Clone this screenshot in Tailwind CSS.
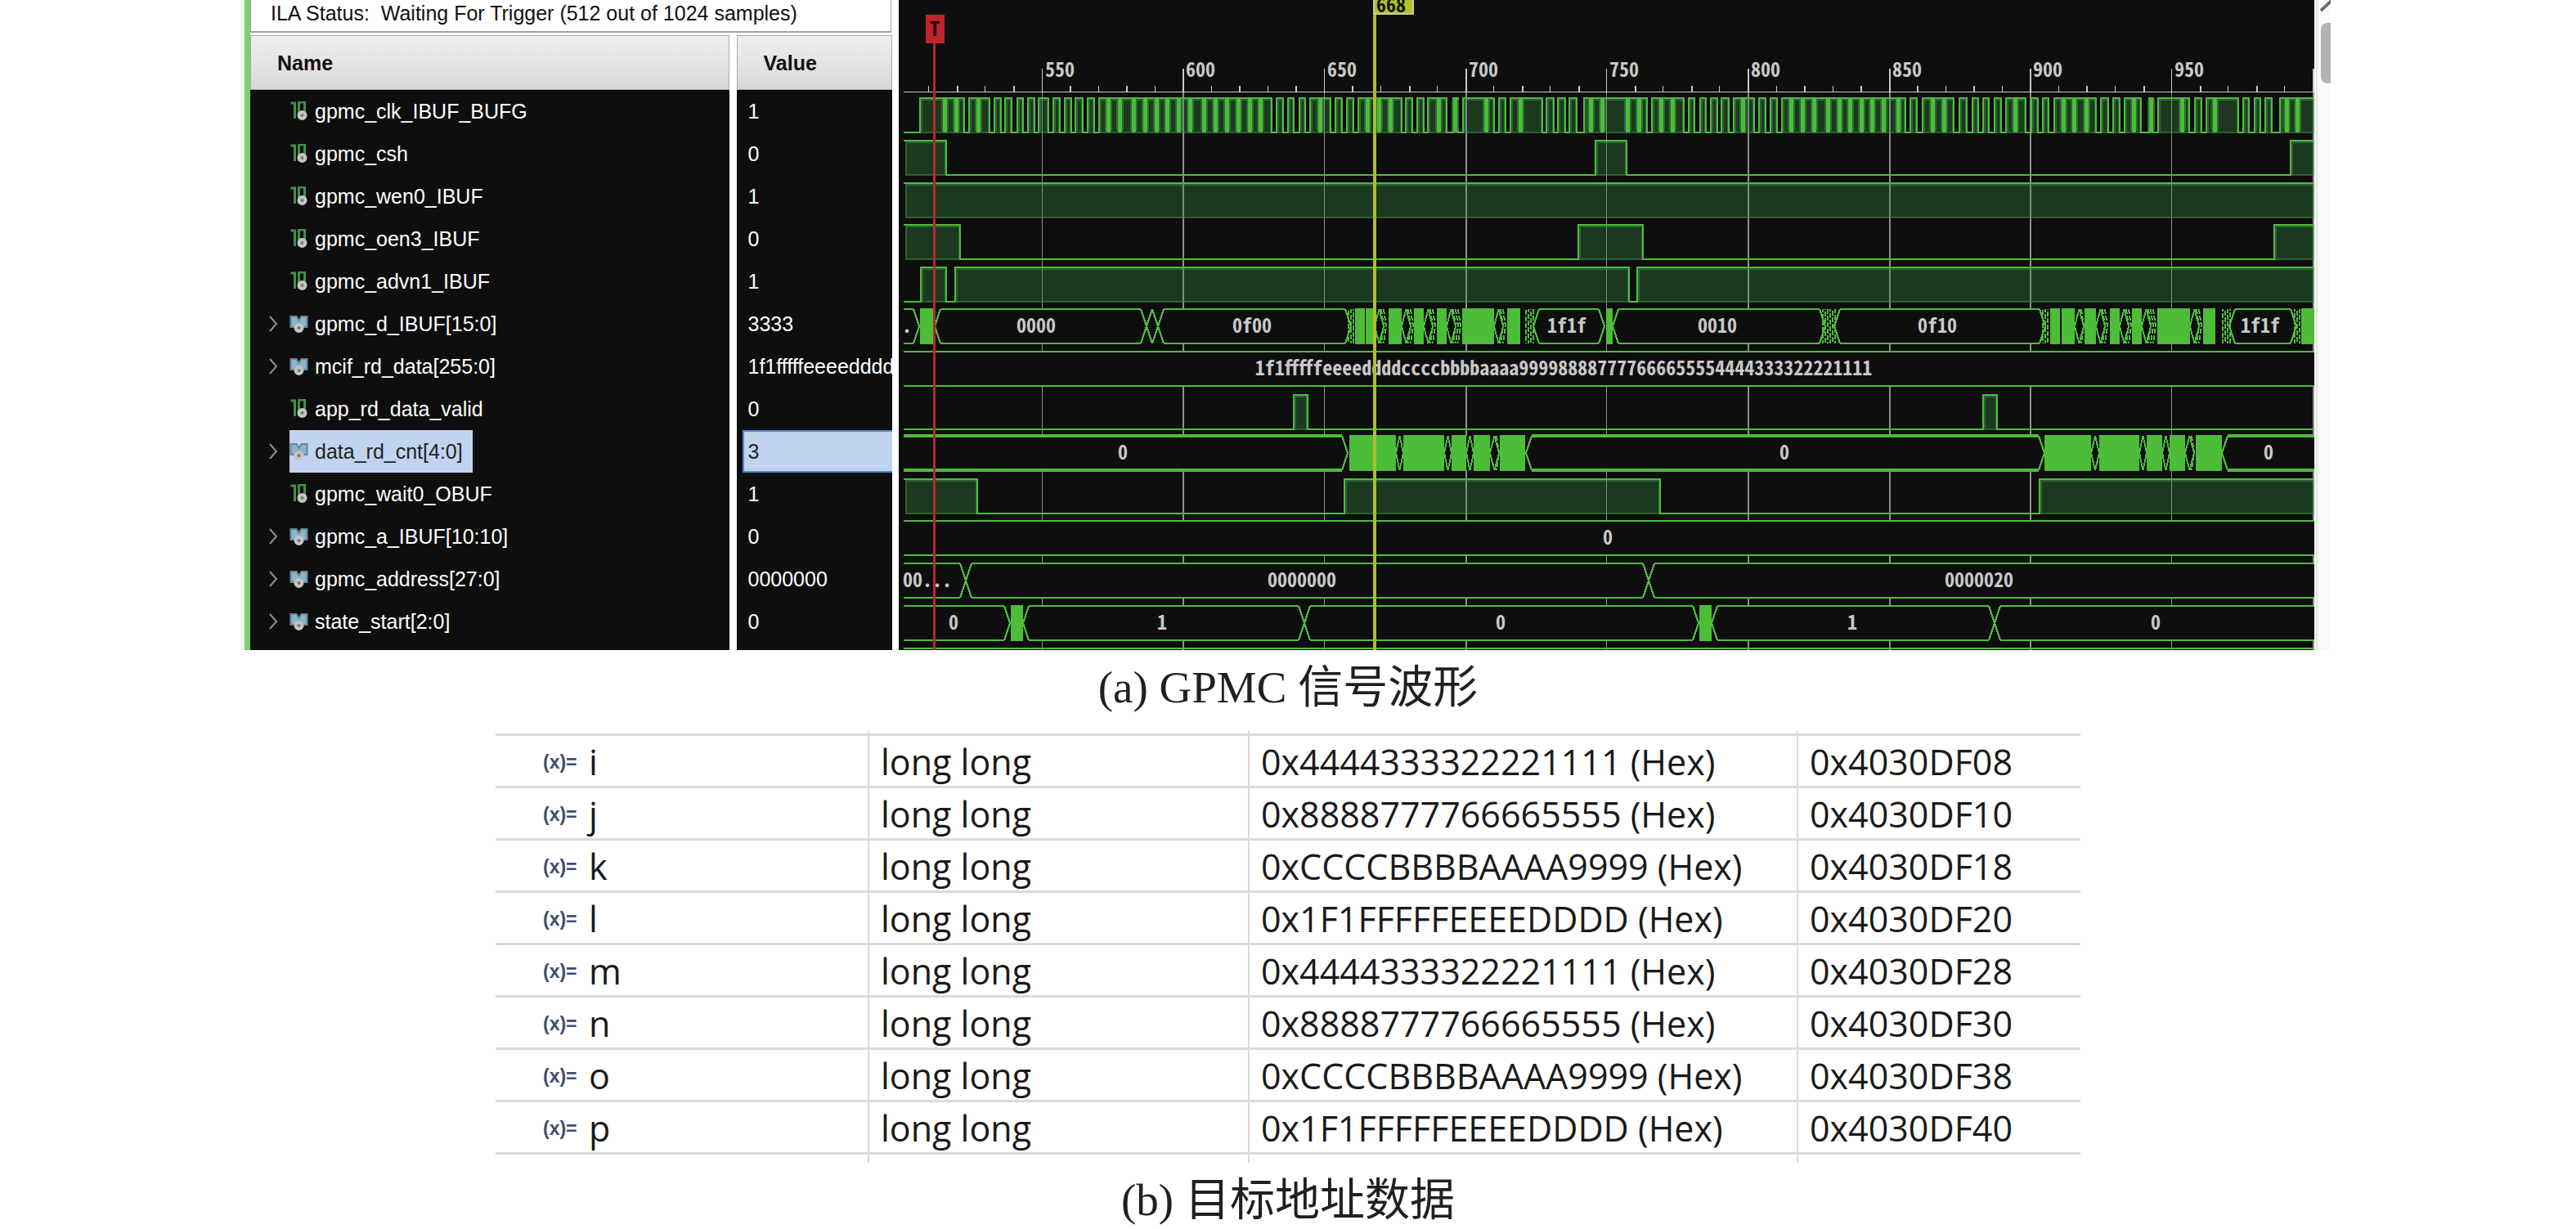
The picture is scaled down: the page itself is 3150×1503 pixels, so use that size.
<!DOCTYPE html>
<html lang="zh">
<head>
  <meta charset="UTF-8">
  <meta name="viewport" content="width=device-width, initial-scale=1.0">
  <title>GPMC</title>
  <script src="https://cdn.jsdelivr.net/npm/@tailwindcss/browser@4"></script>
</head>
<body class="bg-white text-[#231f20]">
  <!-- Icon sprites -->
  <svg class="hidden">
    <symbol id="bit" viewBox="0 0 22 24">
      <path d="M1 2h5v19" fill="none" stroke="#3f9148" stroke-width="3"/>
      <path d="M11 1h7v18h-7z" fill="none" stroke="#3f9148" stroke-width="3"/>
      <circle cx="15" cy="17" r="4" fill="#777" stroke="#c4c4c4" stroke-width="4"/>
    </symbol>
    <symbol id="bus" viewBox="0 0 22 24">
      <path d="M1 3h7l3 5 3-5h7v13h-5l-5 3-5-3H1z" fill="#86b6c8" stroke="#6a8794" stroke-width="2"/>
      <circle cx="11" cy="17" r="4" fill="#777" stroke="#c4c4c4" stroke-width="4"/>
    </symbol>
    <symbol id="chev" viewBox="0 0 12 20">
      <path d="M2 1l8 9-8 9" fill="none" stroke="#8c8c8c" stroke-width="2"/>
    </symbol>
  </svg>

  <main>
    <!-- Logic analyzer -->
    <section class="ml-[295px] mr-[300px] flex h-[795px] overflow-hidden font-['Liberation_Sans',sans-serif] text-[25px] leading-7">
      <div class="w-1 shrink-0 bg-[#f0f0ee]"></div>
      <div class="w-[7px] shrink-0 bg-[#7dce6e]"></div>

      <div class="w-[793px] shrink-0">
        <p class="mb-[3px] h-10 w-[784px] border-x border-b-2 border-[#a3a3a5] pt-0.5 pl-6 text-[#111] whitespace-pre">ILA Status:  Waiting For Trigger (512 out of 1024 samples)</p>
        <table class="w-[785px] table-fixed border-collapse text-left">
          <colgroup><col class="w-[590px]"><col></colgroup>
          <thead>
            <tr class="h-[67px] text-[#111]">
              <th class="border-r-[9px] border-white p-0"><div class="flex h-[67px] items-center border border-[#aaaaac] bg-linear-to-b from-[#f0f0f0] to-[#d8d6da] pl-8">Name</div></th>
              <th class="p-0"><div class="flex h-[67px] items-center border border-[#aaaaac] bg-linear-to-b from-[#f0f0f0] to-[#d8d6da] pl-8">Value</div></th>
            </tr>
          </thead>
          <tbody id="signals" class="bg-[#0e0e0e] text-white"></tbody>
        </table>
      </div>

      <!-- Waveforms -->
      <div class="min-w-0 flex-1 bg-[#0e0e0e]">
        <svg id="wave" viewBox="0 0 1731 795" class="h-[795px] w-full" preserveAspectRatio="xMinYMin meet"></svg>
      </div>

      <!-- Scrollbar -->
      <div class="ml-0.5 w-[18px] shrink-0 overflow-hidden border-l-2 border-[#e4e4e4] bg-[#fafaf9]">
        <svg viewBox="0 0 16 110" class="h-[110px] w-4">
          <path d="M4 13l14-13" stroke="#6b6e75" stroke-width="4"/>
          <rect x="4" y="28" width="24" height="74" rx="8" fill="#b4b4b4"/>
        </svg>
      </div>
    </section>
    <h2 class="mt-3 text-center font-['Liberation_Serif','Noto_Sans_CJK_SC',serif] text-[55px] leading-[68px]">(a) GPMC 信号波形</h2>

    <!-- Variables -->
    <section class="mx-[606px] mt-[19px]">
      <table class="w-full table-fixed border-collapse font-['Open_Sans',sans-serif] text-[43px] leading-[58px] text-[#1a1a1a]">
        <colgroup><col class="w-[456px]"><col class="w-[465px]"><col class="w-[671px]"><col></colgroup>
        <tbody id="vars"></tbody>
      </table>
    </section>
    <h2 class="mt-3 text-center font-['Liberation_Serif','Noto_Sans_CJK_SC',serif] text-[55px] leading-[68px]">(b) 目标地址数据</h2>
  </main>

  <script>
    // ---- signal list ----
    const signals = [
      ['gpmc_clk_IBUF_BUFG', '1'],
      ['gpmc_csh', '0'],
      ['gpmc_wen0_IBUF', '1'],
      ['gpmc_oen3_IBUF', '0'],
      ['gpmc_advn1_IBUF', '1'],
      ['gpmc_d_IBUF[15:0]', '3333'],
      ['mcif_rd_data[255:0]', '1f1fffffeeeedddd'],
      ['app_rd_data_valid', '0'],
      ['data_rd_cnt[4:0]', '3'],
      ['gpmc_wait0_OBUF', '1'],
      ['gpmc_a_IBUF[10:10]', '0'],
      ['gpmc_address[27:0]', '0000000'],
      ['state_start[2:0]', '0'],
    ];
    document.getElementById('signals').innerHTML = signals.map(([name, value]) => {
      const isBus = name.includes('[');
      const selected = name.startsWith('data_rd_cnt');
      return `<tr class="h-[52px]">
        <td class="border-r-[9px] border-white p-0"><div class="flex h-[52px] items-center">
          <span class="flex w-12 justify-end pr-3.5">${isBus ? '<svg class="h-5 w-3"><use href="#chev"/></svg>' : ''}</span>
          <span class="flex h-full items-center gap-2 pr-3 ${selected ? 'bg-[#c1d3ef] text-[#222]' : ''}"><svg class="h-6 w-[23px]"><use href="#${isBus ? 'bus' : 'bit'}"/></svg>${name}</span>
        </div></td>
        <td class="overflow-hidden p-0"><div class="ml-[7px] flex h-[52px] items-center pl-[5px] border-2 border-r-0 ${selected ? 'border-[#4d8ac6] bg-[#c1d3ef] text-[#222]' : 'border-transparent'}">${value}</div></td>
      </tr>`;
    }).join('') + '<tr class="h-[9px]"><td class="border-r-[9px] border-white p-0"></td><td class="p-0"></td></tr>';

    // ---- waveforms ----
    const LINE = '#4fba3f', SOLID = '#4cbc39', BG = '#0e0e0e', END = 1731;
    const rowTop = i => Math.round(120 + i * 51.8);
    const out = [];
    const rect = (x, y, w, h, c) => out.push(`<rect x="${x}" y="${y}" width="${w}" height="${h}" fill="${c}"/>`);
    const label = (x, y, t, c = '#c8c8c8', anchor = 'middle') => out.push(`<text x="${x}" y="${y}" fill="${c}" text-anchor="${anchor}">${t}</text>`);
    const tickX = s => 175.5 + (s - 550) * 3.454;

    // ruler and grid
    rect(6, 112, END - 6, 1, '#c8c8c8');
    for (let s = 510; s <= 1000; s += 10) {
      const x = Math.round(tickX(s));
      const major = s % 50 === 0;
      if (major) {
        const w = [550, 650, 750, 950].includes(s) ? 1 : 2;
        rect(x - 1, 84, w, 29, '#c8c8c8');
        rect(x - 1, 113, w, 682, '#8e8e92');
        if (s < 1000) label(x + 3, 94, s, '#c8c8c8', 'start');
      } else rect(x - 1, 105, s % 20 ? 1 : 2, 8, '#c8c8c8');
    }

    // single-bit rows: ranges where the signal is high
    function bit(i, highs) {
      const t = rowTop(i), b = t + 42;
      let d = `M6 ${highs[0][0] <= 7 ? t : b}`;
      highs.forEach(([a, z]) => {
        out.push(`<rect x="${a + 2}" y="${t + 2}" width="${z - a - 3}" height="${b - t - 2}" fill="#3c9447" fill-opacity=".32" stroke="#3c9447" stroke-opacity=".55" stroke-width="2"/>`);
        if (a > 7) d += `H${a}V${t}`;
        d += `H${z}`;
        if (z < END) d += `V${b}`;
      });
      if (highs[highs.length - 1][1] < END) d += `H${END}`;
      out.push(`<path d="${d}" fill="none" stroke="${LINE}" stroke-width="2"/>`);
    }

    // clock: low gaps and the places where two edges touch
    const gaps = [[80,86],[111,117],[125,130],[138,145],[152,158],[166,171],[183,189],[197,203],[211,216],[225,231],[239,245],[456,462],[470,476],[483,490],[497,503],[528,534],[542,548],[556,562],[615,620],[628,634],[642,647],[670,678],[684,690],[728,734],[742,748],[787,792],[801,806],[815,820],[829,838],[915,921],[960,966],[973,980],[987,993],[1001,1006],[1015,1021],[1046,1052],[1060,1066],[1074,1080],[1231,1237],[1245,1252],[1290,1297],[1306,1313],[1320,1326],[1333,1340],[1348,1354],[1378,1385],[1393,1399],[1406,1413],[1464,1470],[1479,1485],[1493,1499],[1519,1529],[1534,1540],[1578,1585],[1593,1599],[1638,1644],[1651,1658],[1665,1671],[1679,1689]];
    const touching = [54,68,95,254,268,285,299,313,326,340,354,371,385,399,413,427,440,513,571,585,599,658,678,716,758,844,858,889,903,930,944,1030,1089,1103,1117,1134,1148,1161,1175,1188,1202,1220,1262,1276,1363,1422,1435,1450,1508,1529,1567,1607,1695,1708];
    const clkHigh = [];
    let start = 26;
    gaps.forEach(([a, z]) => { clkHigh.push([start, a]); start = z; });
    clkHigh.push([start, END]);
    bit(0, clkHigh);
    touching.forEach(x => {
      rect(x - 2, 122, 9, 38, '#2c6b33');
      rect(x, 119, 5, 43, SOLID);
    });

    bit(1, [[7, 58], [852, 890], [1702, END]]);
    bit(2, [[7, END]]);
    bit(3, [[7, 75], [831, 910], [1682, END]]);
    bit(4, [[27, 58], [69, 893], [903, END]]);
    bit(7, [[483, 500], [1326, 1343]]);
    bit(9, [[7, 96], [545, 931], [1395, END]]);

    // bus rows: cells are [left tip, right tip, text, text centre]
    function bus(i, cells, solids = [], hatch = [], w = 2) {
      const t = rowTop(i) - 1, b = t + 42, m = (t + b) / 2;
      rect(6, t, END - 6, 42, BG);
      const hex = (x0, x1) => {
        const s = Math.min(7, (x1 - x0) / 2);
        const rail = y => `M${x0 < 6 ? 6 : x0 + s} ${y}H${x1 > END ? END : x1 - s}`;
        const left = x0 < 6 ? '' : `M${x0 + s} ${t}L${x0} ${m}L${x0 + s} ${b}`;
        const right = x1 > END ? '' : `M${x1 - s} ${t}L${x1} ${m}L${x1 - s} ${b}`;
        out.push(`<path d="${rail(t)}${rail(b)}" stroke="${LINE}" stroke-width="${w}"/>`);
        out.push(`<path d="${left}${right}" fill="none" stroke="${LINE}" stroke-width="2"/>`);
      };
      hatch.forEach(([x0, x1]) => {
        for (let x = x0 + 1; x < x1; x += 3)
          out.push(`<path d="M${x} ${t}V${b}" stroke="${SOLID}" stroke-width="2" stroke-dasharray="6 2" stroke-dashoffset="${x % 8}"/>`);
      });
      solids.forEach(([x0, x1], k) => {
        rect(x0, t - 1, x1 - x0, 44, SOLID);
        // edge between two neighbouring bursts
        const next = solids[k + 1];
        if (next && next[0] - x1 > 4 && next[0] - x1 < 24) {
          const lens = Math.min(next[0] - x1, 11);
          hex(x1, x1 + lens);
          for (let x = x1 + lens; x < next[0]; x += 3)
            out.push(`<path d="M${x - 3} ${t}L${x} ${m}L${x - 3} ${b}" stroke="${SOLID}" stroke-width="2" fill="none" stroke-dasharray="6 2"/>`);
        }
      });
      cells.forEach(([x0, x1, text, cx]) => {
        hex(x0, x1);
        if (text) label(cx, t + 29, text);
      });
    }

    bus(5, [[0, 25, '.', 10], [44, 303, '0000', 168], [303, 317], [317, 553, '0f00', 432], [776, 863, '1f1f', 817], [873, 1133, '0010', 1001], [1144, 1402, '0f10', 1270], [1627, 1709, '1f1f', 1665]],
      [[26,44],[558,570],[571,582],[599,615],[630,642],[658,670],[689,728],[744,760],[865,873],[1408,1420],[1422,1438],[1450,1464],[1481,1493],[1508,1520],[1539,1579],[1595,1610],[1715,1731]],
      [[549,558],[766,779],[1129,1147],[1398,1408],[1618,1631],[1706,1715]]);
    bus(6, [[0, 1800, '1f1fffffeeeeddddccccbbbbaaaa999988887777666655554444333322221111', 813]]);
    bus(8, [[0, 549, '0', 274], [767, 1401, '0', 1083], [1618, 1800, '0', 1675]],
      [[551,608],[617,667],[676,694],[703,723],[735,766],[1401,1458],[1468,1517],[1526,1545],[1554,1573],[1586,1618]], [], 4);
    bus(10, [[0, 1800, '0', 867]]);
    bus(11, [[0, 82, '00...', 35], [82, 917, '0000000', 493], [917, 1800, '0000020', 1321]]);
    bus(12, [[0, 136, '0', 67], [152, 496, '1', 322], [496, 978, '0', 736], [994, 1340, '1', 1166], [1340, 1800, '0', 1537]],
      [[137,152],[979,994]]);
    rect(6, 792, END - 6, 2, LINE);

    // markers
    rect(42, 53, 3, 742, '#b3282d');
    rect(33, 18, 23, 35, '#c1242b');
    label(44, 44, 'T', '#1a0a0a');
    rect(580, 0, 4, 795, '#b0bc2e');
    out.push('<path d="M581 -2V17H629V-2z" fill="#b5c227" stroke="#c8cba0" stroke-width="2"/>');
    label(584, 15, '668', '#14140a', 'start');

    document.getElementById('wave').innerHTML =
      `<g shape-rendering="crispEdges" class="font-['Noto_Sans_CJK_SC',monospace] text-[24px] font-bold [font-feature-settings:'hwid']">${out.join('')}</g>`;

    // ---- variable table ----
    const vars = [
      ['i', '0x4444333322221111', '0x4030DF08'],
      ['j', '0x8888777766665555', '0x4030DF10'],
      ['k', '0xCCCCBBBBAAAA9999', '0x4030DF18'],
      ['l', '0x1F1FFFFFEEEEDDDD', '0x4030DF20'],
      ['m', '0x4444333322221111', '0x4030DF28'],
      ['n', '0x8888777766665555', '0x4030DF30'],
      ['o', '0xCCCCBBBBAAAA9999', '0x4030DF38'],
      ['p', '0x1F1FFFFFEEEEDDDD', '0x4030DF40'],
    ];
    const edge = 'border-r-2 border-[#dadada]';
    const filler = h => `<tr class="${h}"><td class="${edge} p-0"></td><td class="${edge} p-0"></td><td class="${edge} p-0"></td><td class="p-0"></td></tr>`;
    document.getElementById('vars').innerHTML = filler('h-1') + vars.map(([name, value, addr]) => `
      <tr class="h-16 border-y-3 border-[#dadada]">
        <td class="${edge} px-0 pt-[3px] pb-0"><div class="flex items-center pl-[58px]"><span class="w-14 font-['Liberation_Sans',sans-serif] text-[23px] font-bold text-[#3d4d72]">(x)=</span>${name}</div></td>
        <td class="${edge} pt-[3px] pr-0 pb-0 pl-3.5">long long</td>
        <td class="${edge} pt-[3px] pr-0 pb-0 pl-3.5">${value} (Hex)</td>
        <td class="pt-[3px] pr-0 pb-0 pl-3.5">${addr}</td>
      </tr>`).join('') + filler('h-3');
  </script>
</body>
</html>
